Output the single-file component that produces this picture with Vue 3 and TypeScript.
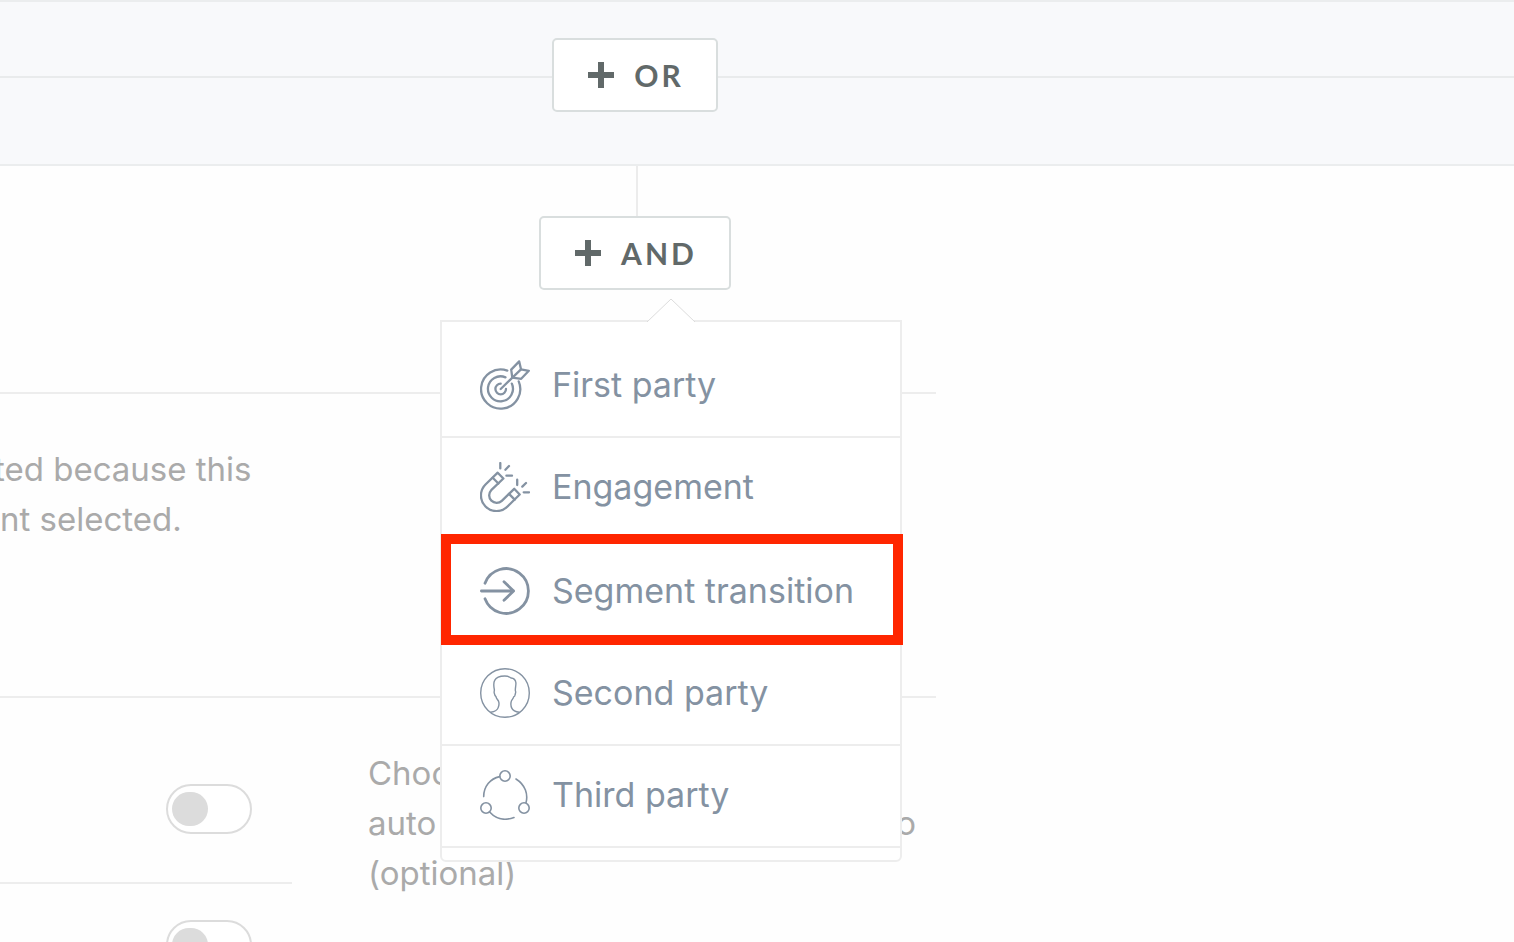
<script setup lang="ts">
import { ref } from 'vue'

type IconName = 'target' | 'magnet' | 'transition' | 'person' | 'network'

interface MenuEntry {
  label: string
  icon: IconName
  highlighted?: boolean
}

const entries: MenuEntry[] = [
  { label: 'First party', icon: 'target' },
  { label: 'Engagement', icon: 'magnet' },
  { label: 'Segment transition', icon: 'transition', highlighted: true },
  { label: 'Second party', icon: 'person' },
  { label: 'Third party', icon: 'network' },
]

const toggles = ref<boolean[]>([false, false])
</script>

<template>
  <main class="page">
    <section class="band">
      <div class="axis or-row">
        <button type="button" class="operator">
          <svg class="plus" viewBox="0 0 26 26" aria-hidden="true"><path d="M13 0V26M0 13H26" /></svg>
          <span>OR</span>
        </button>
      </div>
    </section>

    <section class="and-section">
      <div class="axis and-row">
        <div class="connector"></div>
        <div class="anchor">
          <button type="button" class="operator" aria-haspopup="menu" aria-expanded="true">
            <svg class="plus" viewBox="0 0 26 26" aria-hidden="true"><path d="M13 0V26M0 13H26" /></svg>
            <span>AND</span>
          </button>

          <div class="menu">
            <svg class="pointer" viewBox="0 0 48 24" aria-hidden="true">
              <path class="pointer-fill" d="M0 24L24 1L48 24Z" />
              <path class="pointer-line" d="M0 24L24 1L48 24" />
            </svg>
            <ul class="entries">
              <li v-for="entry in entries" :key="entry.label" :class="['row', { highlighted: entry.highlighted }]">
                <button type="button" class="entry">
                  <svg v-if="entry.icon === 'target'" class="icon" viewBox="0 0 50 50" aria-hidden="true">
                    <g stroke-width="2.3">
                      <path d="M27.3 10.6A19.6 19.6 0 1 0 38.7 21.4" />
                      <path d="M25.5 17.4A12.5 12.5 0 1 0 31.8 23.6" />
                      <path d="M20.7 23.7A5.3 5.3 0 1 0 26 29" />
                      <path d="M20.7 29L41 9.3" />
                      <path d="M39.2 1.4L31.2 9.6L32.3 17.6L41.2 18.8L48.8 10.8L41 9.3Z" />
                    </g>
                  </svg>
                  <svg v-else-if="entry.icon === 'magnet'" class="icon" viewBox="0 0 50 50" aria-hidden="true">
                    <g stroke-width="2.3">
                      <path d="M17.7 10.7L5.5 22.5A15.5 15.5 0 0 0 27.5 44.5L39.7 32.5L34.2 26.8L21.8 38.8A7.5 7.5 0 0 1 11.2 28.2L23.4 16.5Z" />
                      <path d="M12.7 15.7L18.4 21.5M29 31.9L34.7 37.6" />
                      <path d="M20.3 1V6.4M25.4 7.7L29 4M26.4 13.7H32M37.2 17.7V23M42.3 24.6L46 21M43.7 30.3H49" />
                    </g>
                  </svg>
                  <svg v-else-if="entry.icon === 'transition'" class="icon" viewBox="0 0 50 50" aria-hidden="true">
                    <g stroke-width="2.8">
                      <path d="M5 17.2A22.4 22.4 0 1 1 5 32.8" />
                      <path d="M1.4 25H33.6M24 15.8L33.6 25L24 34.2" />
                    </g>
                  </svg>
                  <svg v-else-if="entry.icon === 'person'" class="icon" viewBox="0 0 50 50" aria-hidden="true">
                    <g stroke-width="1.4">
                      <circle cx="25" cy="25" r="24.3" />
                      <path d="M10.7 44.3C14.5 43.6 17.4 42 18.2 39.6C19.2 37 19.3 35.2 18.6 33.4C17.8 31.6 16.2 30.6 16 28.6C14.6 27.8 14.5 26.5 14.2 24.8C13.9 23.6 14.4 23 14.4 22C13.6 18 13.4 14.6 14.7 12.4C16 9.6 20 8 24.8 8C28.5 8 30 9.2 31 10C34.5 10.2 35.6 12 35.9 14.8C36.1 17.6 35 20.5 35.4 22.8C36.2 24 35.3 25.4 35.1 26.8C35 28 34.6 28.6 33.8 28.7C33.4 30.6 31.6 31.6 31.2 33.6C30.6 36 30.9 38.4 31.9 40.4C33 42.6 36 43.8 39.3 44.3" />
                    </g>
                  </svg>
                  <svg v-else class="icon" viewBox="0 0 50 50" aria-hidden="true">
                    <g stroke-width="1.6">
                      <circle cx="25" cy="6" r="5.2" />
                      <circle cx="6" cy="38" r="5.2" />
                      <circle cx="44" cy="38" r="5.2" />
                      <path d="M3.7 26.6C3.7 16.6 10.2 8.6 19.6 6.6M36 9C45.6 15 48.2 24.6 46 32.8M9.6 42C16.6 49.6 25.6 50.6 34 47.5" />
                    </g>
                  </svg>
                  <span>{{ entry.label }}</span>
                </button>
              </li>
            </ul>
          </div>
        </div>
      </div>
    </section>

    <section class="panel notice">
      <p class="copy">ted because this<br />nt selected.</p>
    </section>

    <section class="panel settings">
      <div class="switches">
        <div v-for="(_, index) in toggles" :key="index" class="switch-row">
          <input v-model="toggles[index]" type="checkbox" role="switch" class="switch" :aria-label="`Option ${index + 1}`" />
        </div>
      </div>
      <p class="copy help">
        <span>Choose</span>
        <span class="spread"><span>auto</span><span>to</span></span>
        <span>(optional)</span>
      </p>
    </section>
  </main>
</template>

<style>
body {
  margin: 0;
  background: #fefefe;
}
</style>

<style scoped>
.page {
  height: 100vh;
  overflow: hidden;
  font-family: Inter, 'Liberation Sans', sans-serif;
  font-size: 34px;
  line-height: 50px;
  color: #aaa;
}

.band {
  box-sizing: border-box;
  border-top: 2px solid #ebedee;
  border-bottom: 2px solid #ebedee;
  background: linear-gradient(#e9ebec, #e9ebec) 0 74px / 100% 2px no-repeat #f8f9fb;
}

.axis {
  display: flex;
  flex-direction: column;
  align-items: center;
  max-width: 1270px;
}

.or-row {
  padding: 36px 0 52px;
}

.operator {
  box-sizing: border-box;
  display: flex;
  align-items: center;
  gap: 20px;
  height: 74px;
  padding: 0 32px 0 34px;
  border: 2px solid #d9dede;
  border-radius: 5px;
  background: #fff;
  color: #616969;
  font-family: Lato, Inter, sans-serif;
  font-size: 30px;
  font-weight: 700;
  line-height: 36px;
  letter-spacing: 3px;
}

.plus {
  width: 26px;
  height: 26px;
  fill: none;
  stroke: #616969;
  stroke-width: 6;
}

.and-section {
  height: 226px;
}

.connector {
  width: 2px;
  height: 50px;
  margin-left: 4px;
  background: #ececec;
}

.anchor {
  position: relative;
}

.menu {
  position: absolute;
  z-index: 1;
  top: 104px;
  left: 50%;
  box-sizing: border-box;
  width: 462px;
  margin-left: -195px;
  padding: 14px 0 12px;
  border: 2px solid #ededed;
  border-radius: 0 0 6px 6px;
  background: #fff;
}

.pointer {
  position: absolute;
  top: -24px;
  left: 205px;
  width: 48px;
  height: 24px;
}

.pointer-fill {
  fill: #fff;
}

.pointer-line {
  fill: none;
  stroke: #dcdcdc;
  stroke-width: 1;
}

.entries {
  margin: 0;
  padding: 0;
  list-style: none;
}

.row {
  position: relative;
  box-sizing: border-box;
  height: 102px;
  border-bottom: 2px solid #ededed;
}

.row.highlighted {
  height: 104px;
}

.row.highlighted::after {
  content: '';
  position: absolute;
  inset: -6px -3px -3px -1px;
  border: 10px solid #ff2600;
  pointer-events: none;
}

.entry {
  display: flex;
  align-items: center;
  gap: 22px;
  width: 100%;
  height: 100%;
  padding: 0 38px 2px;
  border: 0;
  background: none;
  color: #8492a2;
  font: inherit;
  text-align: left;
  white-space: nowrap;
}

.highlighted .entry {
  padding-bottom: 0;
}

.icon {
  flex: none;
  width: 50px;
  height: 50px;
  fill: none;
  stroke: #8492a2;
  stroke-linecap: round;
  stroke-linejoin: round;
}

.panel {
  box-sizing: border-box;
  max-width: 936px;
  border-top: 2px solid #ededed;
}

.notice {
  height: 304px;
  padding-top: 50px;
}

.copy {
  margin: 0;
  font-size: 33px;
}

.notice .copy {
  text-indent: -6px;
}

.settings {
  display: flex;
  gap: 76px;
  padding-right: 20px;
}

.switches {
  flex: none;
  width: 292px;
}

.switch-row {
  display: flex;
  justify-content: flex-end;
  padding: 36px 40px 48px 0;
  border-bottom: 2px solid #ededed;
}

.switch-row:first-child {
  padding-top: 86px;
}

.switch {
  appearance: none;
  box-sizing: border-box;
  width: 86px;
  height: 50px;
  margin: 0;
  padding: 6px 4px;
  border: 2px solid #dcdcdc;
  border-radius: 25px;
  background: #fff;
}

.switch::before {
  content: '';
  display: block;
  width: 36px;
  height: 34px;
  border-radius: 17px;
  background: #dcdcdc;
}

.switch:checked::before {
  margin-left: auto;
}

.help {
  display: flex;
  flex: 1;
  flex-direction: column;
  padding-top: 50px;
}

.spread {
  display: flex;
  justify-content: space-between;
}
</style>
